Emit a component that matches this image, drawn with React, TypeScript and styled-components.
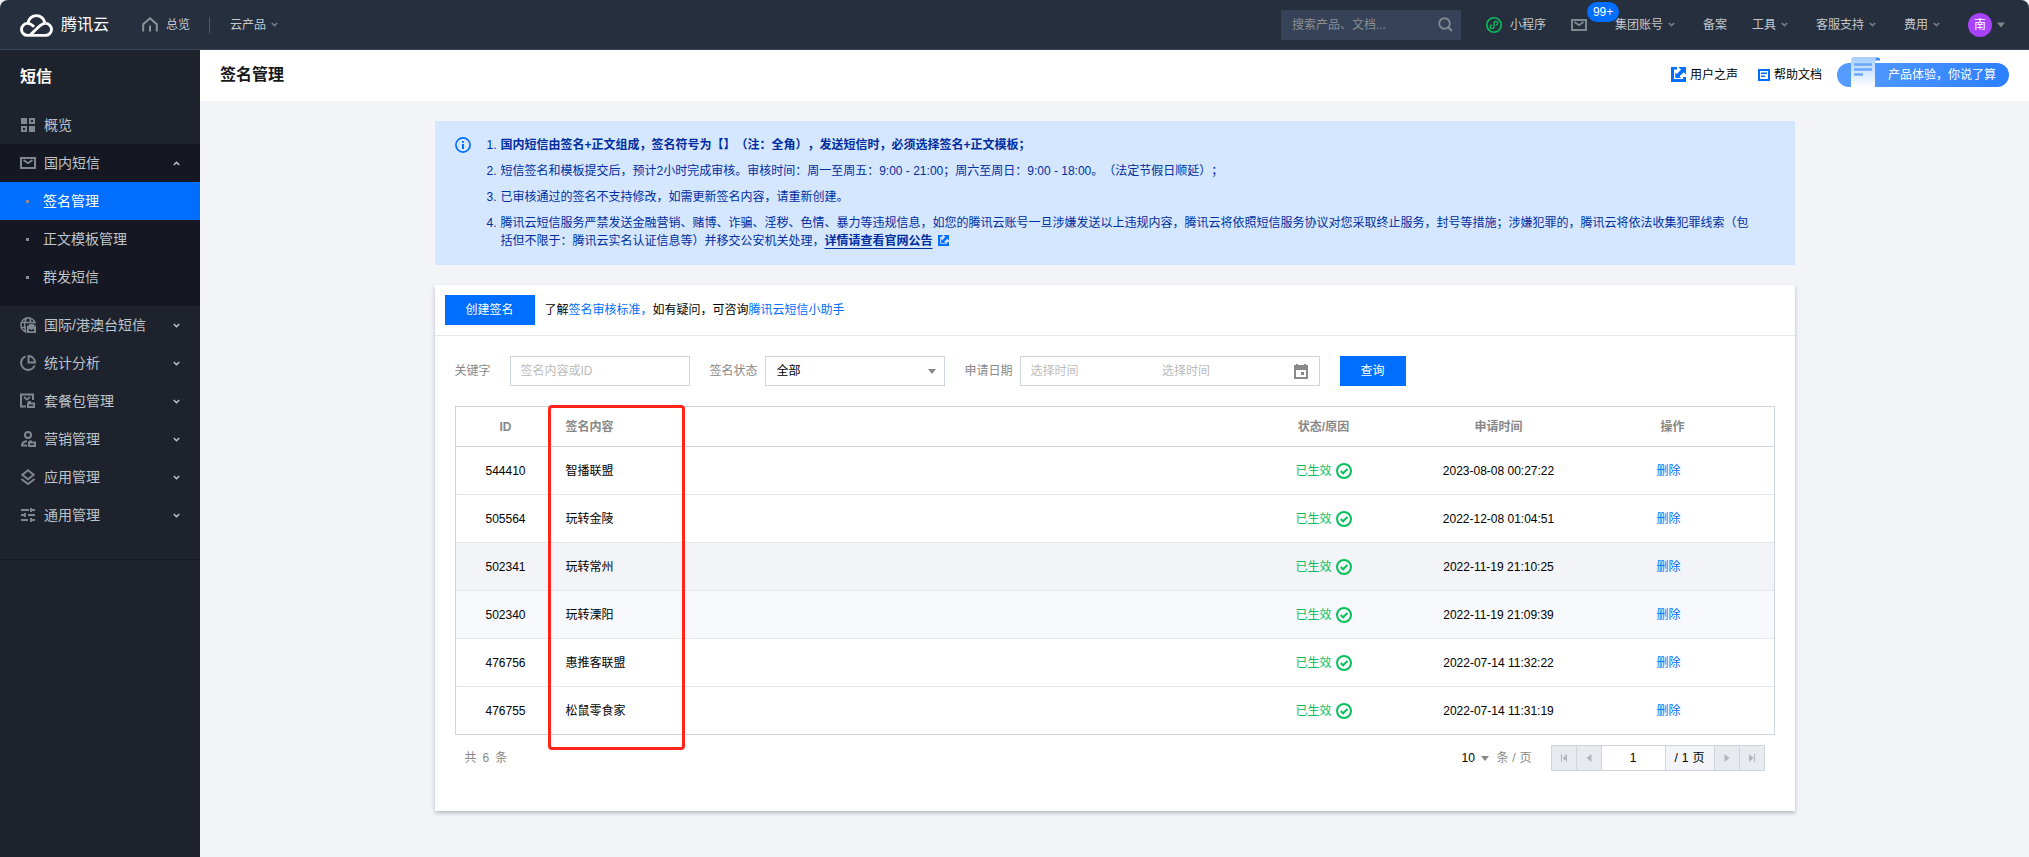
import React from 'react';
import styled, { createGlobalStyle } from 'styled-components';

const FONT = '"Liberation Sans", "Noto Sans CJK SC", sans-serif';
const BLUE = '#006eff';

const GlobalStyle = createGlobalStyle`
  *, *::before, *::after { box-sizing: border-box; }
  body {
    margin: 0;
    background: #f2f4f8;
    color: #000;
    font: 12px/18px ${FONT};
    text-spacing-trim: space-all;
  }
  button, input, select { font: inherit; color: inherit; margin: 0; border-radius: 0; }
  button { cursor: pointer; }
  a { text-decoration: none; }
  svg { display: block; flex: none; }
`;

/* ---------- top bar ---------- */

const TopBar = styled.header`
  display: flex;
  align-items: center;
  justify-content: space-between;
  height: 50px;
  padding: 0 24px 0 20px;
  background: #262f3e;
  border-bottom: 1px solid #3a4454;
  border-radius: 8px 8px 0 0;
  color: #c4c8cc;
`;

const TopGroup = styled.div<{ $gap?: number }>`
  display: flex;
  align-items: center;
  gap: ${(p) => p.$gap ?? 0}px;
`;

const Brand = styled.a`
  display: flex;
  align-items: center;
  gap: 8px;
  margin-right: 33px;
  color: #fff;
  font-size: 16px;
  line-height: 24px;
`;

const TopLink = styled.a<{ $gap?: number }>`
  display: flex;
  align-items: center;
  gap: ${(p) => p.$gap ?? 8}px;
  color: inherit;
  white-space: nowrap;
`;

const MenuButton = styled.button`
  display: flex;
  align-items: center;
  gap: 5px;
  padding: 0 3px 0 0;
  border: 0;
  background: none;
  white-space: nowrap;
`;

const Divider = styled.span`
  width: 1px;
  height: 16px;
  margin: 0 20px 0 19px;
  background: #4d5766;
`;

const SearchBox = styled.form`
  display: flex;
  align-items: center;
  width: 180px;
  height: 30px;
  padding: 0 8px 0 11px;
  background: #354258;
`;

const SearchInput = styled.input`
  flex: 1;
  min-width: 0;
  border: 0;
  padding: 0;
  outline: 0;
  background: none;
  &::placeholder { color: #8d8f93; opacity: 1; }
`;

const IconButton = styled.button`
  display: flex;
  align-items: center;
  justify-content: center;
  padding: 0;
  border: 0;
  background: none;
`;

const MailLink = styled.a`
  position: relative;
  display: flex;
`;

const Badge = styled.span`
  position: absolute;
  left: 16px;
  bottom: 9px;
  padding: 0 6px;
  border-radius: 10px;
  background: ${BLUE};
  color: #fff;
  line-height: 20px;
`;

const Avatar = styled.span`
  width: 24px;
  height: 24px;
  border-radius: 50%;
  background: #a742ff;
  color: #fff;
  line-height: 24px;
  text-align: center;
`;

/* ---------- shell ---------- */

const Shell = styled.div`
  display: flex;
  min-height: calc(100vh - 50px);
`;

const Sidebar = styled.aside`
  flex: none;
  width: 200px;
  background: #1e222d;
  color: #bfc4c9;
  font-size: 14px;
`;

const SidebarBody = styled.nav`
  padding-bottom: 25px;
  border-bottom: 1px solid #151822;
`;

const SidebarTitle = styled.h2`
  margin: 0;
  padding: 15px 20px 17px;
  color: #fff;
  font-size: 16px;
  line-height: 24px;
`;

const MenuList = styled.ul`
  margin: 0;
  padding: 0;
  list-style: none;
`;

const MenuLink = styled.a`
  display: flex;
  align-items: center;
  gap: 8px;
  height: 38px;
  padding: 0 20px;
  color: inherit;
`;

const MenuLabel = styled.span`
  flex: 1;
  line-height: 20px;
`;

const OpenGroup = styled.li`
  padding-bottom: 10px;
  background: #151822;
`;

const SubLink = styled.a<{ $active?: boolean }>`
  display: flex;
  align-items: center;
  gap: 14px;
  height: 38px;
  padding: 0 20px 0 26px;
  background: ${(p) => (p.$active ? BLUE : 'transparent')};
  color: ${(p) => (p.$active ? '#fff' : 'inherit')};
  &::before {
    content: '';
    width: 3px;
    height: 3px;
    background: #878d93;
  }
`;

const Main = styled.main`
  flex: 1;
  min-width: 0;
`;

const PageHead = styled.div`
  display: flex;
  align-items: center;
  justify-content: space-between;
  height: 51px;
  padding: 0 20px 2px;
  background: #fff;
`;

const PageTitle = styled.h1`
  margin: 0;
  font-size: 16px;
  line-height: 24px;
  color: #16181c;
`;

const HeadLinks = styled.div`
  display: flex;
  align-items: center;
`;

const HeadLink = styled.a`
  display: flex;
  align-items: center;
  gap: 4px;
  margin-right: 20px;
  color: #000;
`;

const Promo = styled.a`
  position: relative;
  display: block;
  width: 172px;
  height: 24px;
  margin-left: -5px;
  padding-left: 51px;
  border-radius: 12px;
  background: linear-gradient(90deg, #579dff, #2b7fff);
  color: #fff;
  line-height: 24px;
  white-space: nowrap;
`;

const PromoArt = styled.svg`
  position: absolute;
  left: 12px;
  bottom: 0;
`;

const Content = styled.div`
  max-width: 1400px;
  margin: 0 auto;
  padding: 20px;
`;

/* ---------- notice ---------- */

const Notice = styled.section`
  display: flex;
  gap: 16px;
  margin-bottom: 20px;
  padding: 15px 40px 15px 20px;
  background: #d5e7ff;
  color: #002da0;
`;

const NoticeList = styled.ol`
  display: flex;
  flex-direction: column;
  gap: 8px;
  margin: 0;
  padding: 0;
  list-style: none;
`;

const NoticeItem = styled.li<{ $strong?: boolean }>`
  display: flex;
  & > span:first-child { flex: none; width: 14px; }
  & > span:last-child { font-weight: ${(p) => (p.$strong ? 700 : 400)}; }
`;

const NoticeLink = styled.a`
  color: inherit;
  font-weight: 700;
  text-decoration: underline;
  text-underline-offset: 3px;
  margin-right: 5px;
`;

const InlineIcon = styled.svg`
  display: inline-block;
  vertical-align: -1px;
`;

/* ---------- card ---------- */

const Card = styled.section`
  padding-bottom: 40px;
  background: #fff;
  box-shadow: 0 2px 4px rgba(54, 58, 80, 0.32);
`;

const ActionBar = styled.div`
  display: flex;
  align-items: center;
  gap: 10px;
  padding: 10px;
  border-bottom: 1px solid #e5e7eb;
`;

const Primary = styled.button<{ $width: number }>`
  width: ${(p) => p.$width}px;
  height: 30px;
  padding: 0;
  border: 0;
  background: ${BLUE};
  color: #fff;
`;

const Hint = styled.p`
  margin: 0;
`;

const TextLink = styled.a`
  color: ${BLUE};
`;

const Filters = styled.form`
  display: flex;
  flex-wrap: wrap;
  gap: 20px;
  padding: 20px;
`;

const Field = styled.div`
  display: flex;
  align-items: center;
`;

const FieldLabel = styled.label`
  width: 55px;
  color: #888;
`;

const TextInput = styled.input`
  width: 180px;
  height: 30px;
  padding: 0 10px;
  border: 1px solid #cfd5de;
  background: #fff;
  &::placeholder { color: #bbb; opacity: 1; }
`;

const SelectWrap = styled.div`
  position: relative;
`;

const Select = styled.select`
  appearance: none;
  display: block;
  width: 180px;
  height: 30px;
  padding: 0 11px;
  border: 1px solid #cfd5de;
  background: #fff;
`;

const SelectArrow = styled.svg`
  position: absolute;
  right: 9px;
  top: 50%;
  margin-top: -2px;
  pointer-events: none;
`;

const DateRange = styled.div`
  display: flex;
  align-items: center;
  width: 300px;
  height: 30px;
  padding: 0 11px 0 10px;
  border: 1px solid #cfd5de;
`;

const DateInput = styled.input`
  flex: 1;
  min-width: 0;
  padding: 0;
  border: 0;
  outline: 0;
  &::placeholder { color: #bbb; opacity: 1; }
`;

const TableArea = styled.div`
  position: relative;
  margin: 0 20px;
`;

const Table = styled.table`
  width: 100%;
  table-layout: fixed;
  border: 1px solid #cfd5de;
  border-spacing: 0;
`;

const Th = styled.th<{ $left?: boolean }>`
  height: 40px;
  padding: 0 10px;
  border-bottom: 1px solid #cfd5de;
  color: #888;
  text-align: ${(p) => (p.$left ? 'left' : 'center')};
`;

const Td = styled.td<{ $left?: boolean }>`
  height: 48px;
  padding: 0 10px;
  border-bottom: 1px solid #e5e8ed;
  text-align: ${(p) => (p.$left ? 'left' : 'center')};
`;

const Tr = styled.tr<{ $bg?: string }>`
  background: ${(p) => p.$bg ?? '#fff'};
  &:last-child td { height: 47px; border-bottom: 0; }
`;

const Status = styled.span`
  display: flex;
  align-items: center;
  justify-content: center;
  gap: 4px;
  color: #0abf5b;
`;

const RowAction = styled.a`
  margin-right: 8px;
  color: ${BLUE};
`;

const Highlight = styled.div`
  position: absolute;
  top: -1px;
  left: 93px;
  width: 137px;
  height: 345px;
  border: 3px solid #ff2419;
  border-radius: 4px;
  pointer-events: none;
`;

const Footer = styled.div`
  display: flex;
  align-items: center;
  justify-content: space-between;
  padding: 10px 30px 0;
  color: #888;
`;

const Total = styled.span`
  display: flex;
  gap: 6px;
`;

const Pager = styled.div`
  display: flex;
  align-items: center;
`;

const SizeSelect = styled.select`
  appearance: none;
  width: 28px;
  height: 26px;
  padding: 0;
  border: 0;
  background: none;
  color: #000;
`;

const SizeWrap = styled.label`
  position: relative;
  display: flex;
  align-items: center;
  gap: 7px;
  margin-right: 20px;
  svg { right: auto; left: 20px; }
`;

const Slash = styled.span`
  display: inline-block;
  width: 11px;
  text-align: center;
`;

const PageButton = styled.button`
  display: flex;
  align-items: center;
  justify-content: center;
  width: 26px;
  height: 26px;
  margin-left: -1px;
  padding: 0;
  border: 1px solid #cfd5de;
  background: #e7eaef;
`;

const PageInput = styled.input`
  width: 65px;
  height: 26px;
  margin-left: -1px;
  padding: 0;
  border: 1px solid #cfd5de;
  color: #000;
  text-align: center;
`;

const PageCount = styled.span`
  display: flex;
  align-items: center;
  justify-content: center;
  gap: 4px;
  width: 50px;
  height: 26px;
  margin-left: -1px;
  border: 1px solid #cfd5de;
  background: #f2f4f8;
  color: #000;
`;

/* ---------- icons ---------- */

const G = '#7f878f';

const Chevron = ({ up, color = '#7b828b' }: { up?: boolean; color?: string }) => (
  <svg width="7" height="5" viewBox="0 0 7 5" fill="none" stroke={color} strokeWidth="1.5">
    <path d={up ? 'M.8 4 3.5 1.3 6.2 4' : 'M.8 1 3.5 3.7 6.2 1'} />
  </svg>
);

const LogoIcon = () => (
  <svg width="33" height="24" viewBox="0 0 33 24" fill="none" stroke="#fff" strokeWidth="2.9">
    <path d="M25.5 10.4a6 6 0 0 1 0 12h-18a6 6 0 0 1 0-12c3 0 4.6 1.4 6.6 3.4" />
    <path d="M25.5 10.4c-3 0-4.5 1.2-7 3.6l-8.3 8" />
    <path d="M8 9.8a8.5 8.5 0 0 1 16.8 0" />
  </svg>
);

const HomeIcon = () => (
  <svg width="16" height="15" viewBox="0 0 16 15" fill="none" stroke="#8c949c" strokeWidth="1.9">
    <path d="M1.2 14.5V7.2L8 1.3l6.8 5.900v7.300M8 8.500v6" />
  </svg>
);

const SearchIcon = () => (
  <svg width="15" height="15" viewBox="0 0 15 15" fill="none" stroke="#7f868d" strokeWidth="1.9">
    <circle cx="6.5" cy="6.5" r="5.3" />
    <path d="m10.5 10.5 3.3 3.5" strokeWidth="2.4" />
  </svg>
);

const MiniProgramIcon = () => (
  <svg width="16" height="16" viewBox="0 0 16 16" fill="none" stroke="#0abf5b">
    <circle cx="8" cy="8" r="7.2" strokeWidth="1.6" />
    <path d="M10.2 8.1A1.9 1.9 0 1 0 8 6v4a1.9 1.9 0 1 1-2.2-2.1" strokeWidth="1.4" strokeLinecap="round" />
  </svg>
);

const MailIcon = () => (
  <svg width="16" height="12" viewBox="0 0 16 12" fill="none" stroke={G} strokeWidth="2">
    <path d="M1 1h14v10H1z" />
    <path d="m3.5 3 4.500 3.200L12.500 3" strokeWidth="1.9" />
  </svg>
);

const GridIcon = () => (
  <svg width="16" height="14" viewBox="-1 0 16 14" fill={G}>
    <path d="M0 0h6v6H0zM8 8h6v6H8z" />
    <path fillRule="evenodd" d="M8 0h6v6H8zm2 2v2h2V2zM0 8h6v6H0zm2 2v2h2v-2z" />
  </svg>
);

const GlobeIcon = () => (
  <svg width="16" height="16" viewBox="0 0 16 16" fill="none" stroke={G} strokeWidth="1.6">
    <path d="M15.2 6.5A7.2 7.2 0 1 0 6.5 15.1M1 5.5h14M1 10.5h5M6 15C4.2 11 4.2 5 6.4 1M10.8 6C10.7 4 10.2 2.5 9.6 1" />
    <path d="M7 8.5h2V7h5v1.500h2V16H7z" fill={G} stroke="none" />
    <path d="M9 12h1.500v1h2v-1H14v2.200H9z" fill="#1e222d" stroke="none" />
  </svg>
);

const PieIcon = () => (
  <svg width="16" height="16" viewBox="0 0 16 16" fill="none" stroke={G} strokeWidth="1.9">
    <path d="M5.5 1.4A7 7 0 1 0 14.6 10.5" />
    <path d="M8.5 1v6.500H15A6.500 6.500 0 0 0 8.500 1z" />
  </svg>
);

const PackageIcon = () => (
  <svg width="16" height="16" viewBox="0 0 16 16" fill="none" stroke={G} strokeWidth="2">
    <path d="M6 13.500H1V1.500h12V7" />
    <path d="m4 4 3 2.600L10 4" strokeWidth="1.7" />
    <path d="M8 10.500h6V14H8zM8 9h3" />
  </svg>
);

const UserIcon = () => (
  <svg width="16" height="16" viewBox="0 0 16 16" fill="none" stroke={G} strokeWidth="2">
    <circle cx="8" cy="4" r="3" />
    <path d="M7 10.200c-3 .2-5 1.800-5 4.300h5M9 11.500h6V15H9zM9 10.500h3" />
  </svg>
);

const LayersIcon = () => (
  <svg width="16" height="16" viewBox="0 0 16 16" fill="none" stroke={G} strokeWidth="1.9">
    <path d="m8 1.200 5.700 4.500L8 10.200 2.300 5.700z" />
    <path d="m1.400 10 6.600 5 6.600-5" />
  </svg>
);

const SlidersIcon = () => (
  <svg width="16" height="14" viewBox="-1 0 16 14" fill="none" stroke={G} strokeWidth="1.9">
    <path d="M0 2h8M10 0v4M10 2h4M0 7h3M4 5v4M7 7h7M0 12h7M10 10v4M10 12h4" />
  </svg>
);

const ExternalGlyph = () => (
  <>
    <path d="M0 0h6v2.500H3V12h9V10h3v5H0z" fill={BLUE} />
    <path d="M7.500 0H15v7.500l-2.300-2.300L8.500 9.300l1.500 1.700H4.300V5.500L6 7l4-4.500z" fill={BLUE} />
  </>
);

const DocIcon = () => (
  <svg width="12" height="12" viewBox="0 0 12 12" fill="none" stroke={BLUE} strokeWidth="1.6">
    <path d="M1 1h10v10H1z" strokeWidth="2" />
    <path d="M3 4.200h6M3 7.200h4" />
  </svg>
);

const InfoIcon = () => (
  <svg width="16" height="18" viewBox="0 -1 16 18" fill="none" stroke={BLUE} strokeWidth="1.7">
    <circle cx="8" cy="8" r="7.1" />
    <path d="M8 7v5M8 4v1.700" strokeWidth="2" />
  </svg>
);

const CalendarIcon = () => (
  <svg width="14" height="15" viewBox="0 0 14 15" fill="#888">
    <path fillRule="evenodd" d="M0 1h2V0h2v1h6V0h2v1h2v14H0zm2 5v7h10V6z" />
    <path d="M7 8h3v3H7z" />
  </svg>
);

const CheckIcon = () => (
  <svg width="16" height="16" viewBox="0 0 16 16" fill="none" stroke="#0abf5b" strokeWidth="2">
    <circle cx="8" cy="8" r="7" />
    <path d="m4.700 8 2.400 2.300 4.300-4.300" />
  </svg>
);

/* ---------- data ---------- */

const rows = [
  { id: '544410', name: '智播联盟', time: '2023-08-08 00:27:22' },
  { id: '505564', name: '玩转金陵', time: '2022-12-08 01:04:51' },
  { id: '502341', name: '玩转常州', time: '2022-11-19 21:10:25', bg: '#f2f4f7' },
  { id: '502340', name: '玩转溧阳', time: '2022-11-19 21:09:39', bg: '#f8f9fc' },
  { id: '476756', name: '惠推客联盟', time: '2022-07-14 11:32:22' },
  { id: '476755', name: '松鼠零食家', time: '2022-07-14 11:31:19' },
];

const subMenu = ['签名管理', '正文模板管理', '群发短信'];

const menu = [
  { label: '国际/港澳台短信', icon: <GlobeIcon /> },
  { label: '统计分析', icon: <PieIcon /> },
  { label: '套餐包管理', icon: <PackageIcon /> },
  { label: '营销管理', icon: <UserIcon /> },
  { label: '应用管理', icon: <LayersIcon /> },
  { label: '通用管理', icon: <SlidersIcon /> },
];

const pagerPaths = {
  first: 'M1 1h1v8H1zM7 1v8L2.500 5z',
  prev: 'M6.500 1v8L1.500 5z',
  next: 'M1.500 1v8l5-4z',
  last: 'M6 1h1v8H6zM1 1v8l4.500-4z',
};

const PagerButton = ({ kind, label }: { kind: keyof typeof pagerPaths; label: string }) => (
  <PageButton type="button" aria-label={label}>
    <svg width="8" height="10" viewBox="0 0 8 10" fill="#b3b7bd">
      <path d={pagerPaths[kind]} />
    </svg>
  </PageButton>
);

export default function App() {
  return (
    <>
      <GlobalStyle />
      <TopBar>
        <TopGroup>
          <Brand href="#">
            <LogoIcon />
            腾讯云
          </Brand>
          <TopLink href="#">
            <HomeIcon />
            总览
          </TopLink>
          <Divider />
          <MenuButton type="button">
            云产品
            <Chevron />
          </MenuButton>
        </TopGroup>
        <TopGroup $gap={25}>
          <SearchBox>
            <SearchInput type="search" aria-label="搜索" placeholder="搜索产品、文档..." />
            <IconButton type="button" aria-label="搜索">
              <SearchIcon />
            </IconButton>
          </SearchBox>
          <TopLink href="#">
            <MiniProgramIcon />
            小程序
          </TopLink>
          <TopGroup $gap={28}>
            <MailLink href="#" aria-label="消息">
              <MailIcon />
              <Badge>99+</Badge>
            </MailLink>
            <MenuButton type="button">
              集团账号
              <Chevron />
            </MenuButton>
          </TopGroup>
          <TopLink href="#">备案</TopLink>
          {['工具', '客服支持', '费用'].map((label) => (
            <MenuButton type="button" key={label}>
              {label}
              <Chevron />
            </MenuButton>
          ))}
          <TopLink href="#" $gap={5}>
            <Avatar>南</Avatar>
            <svg width="8" height="6" viewBox="0 0 8 6" fill="#7f858c">
              <path d="M0 .5h8L4 5.500z" />
            </svg>
          </TopLink>
        </TopGroup>
      </TopBar>

      <Shell>
        <Sidebar>
          <SidebarBody>
            <SidebarTitle>短信</SidebarTitle>
            <MenuList>
              <li>
                <MenuLink href="#">
                  <GridIcon />
                  <MenuLabel>概览</MenuLabel>
                </MenuLink>
              </li>
              <OpenGroup>
                <MenuLink href="#">
                  <MailIcon />
                  <MenuLabel>国内短信</MenuLabel>
                  <Chevron up color="#bfc4c9" />
                </MenuLink>
                <MenuList>
                  {subMenu.map((label, i) => (
                    <li key={label}>
                      <SubLink href="#" $active={i === 0}>
                        {label}
                      </SubLink>
                    </li>
                  ))}
                </MenuList>
              </OpenGroup>
              {menu.map((item) => (
                <li key={item.label}>
                  <MenuLink href="#">
                    {item.icon}
                    <MenuLabel>{item.label}</MenuLabel>
                    <Chevron color="#bfc4c9" />
                  </MenuLink>
                </li>
              ))}
            </MenuList>
          </SidebarBody>
        </Sidebar>

        <Main>
          <PageHead>
            <PageTitle>签名管理</PageTitle>
            <HeadLinks>
              <HeadLink href="#">
                <svg width="15" height="15" viewBox="0 0 15 15">
                  <ExternalGlyph />
                </svg>
                用户之声
              </HeadLink>
              <HeadLink href="#">
                <DocIcon />
                帮助文档
              </HeadLink>
              <Promo href="#">
                <PromoArt width="34" height="30" viewBox="0 0 34 30">
                  <defs>
                    <linearGradient id="paper" x1="0" y1="0" x2="0" y2="1">
                      <stop offset="0" stopColor="#a6cdff" />
                      <stop offset="1" stopColor="#fff" />
                    </linearGradient>
                  </defs>
                  <path d="M26 3.500h5V1.500Q30 .5 27 0z" fill="#3d87f5" />
                  <path d="M2 30V3.500Q2 0 5.500 0H29q-3 .5-3 4v26z" fill="url(#paper)" />
                  <path d="M5 7.500h18M5 12.500h18M5 17.500h9" stroke="#6ba8ff" strokeWidth="2.4" />
                </PromoArt>
                产品体验，你说了算
              </Promo>
            </HeadLinks>
          </PageHead>

          <Content>
            <Notice>
              <InfoIcon />
              <NoticeList>
                <NoticeItem $strong>
                  <span>1.</span>
                  <span>国内短信由签名+正文组成，签名符号为【】（注：全角），发送短信时，必须选择签名+正文模板；</span>
                </NoticeItem>
                <NoticeItem>
                  <span>2.</span>
                  <span>
                    短信签名和模板提交后，预计2小时完成审核。审核时间：周一至周五：9:00 - 21:00；周六至周日：9:00 - 18:00。（法定节假日顺延）；
                  </span>
                </NoticeItem>
                <NoticeItem>
                  <span>3.</span>
                  <span>已审核通过的签名不支持修改，如需更新签名内容，请重新创建。</span>
                </NoticeItem>
                <NoticeItem>
                  <span>4.</span>
                  <span>
                    腾讯云短信服务严禁发送金融营销、赌博、诈骗、淫秽、色情、暴力等违规信息，如您的腾讯云账号一旦涉嫌发送以上违规内容，腾讯云将依照短信服务协议对您采取终止服务，封号等措施；涉嫌犯罪的，腾讯云将依法收集犯罪线索（包括但不限于：腾讯云实名认证信息等）并移交公安机关处理，
                    <NoticeLink href="#">详情请查看官网公告</NoticeLink>
                    <InlineIcon width="11" height="11" viewBox="0 0 15 15">
                      <ExternalGlyph />
                    </InlineIcon>
                  </span>
                </NoticeItem>
              </NoticeList>
            </Notice>

            <Card>
              <ActionBar>
                <Primary type="button" $width={90}>
                  创建签名
                </Primary>
                <Hint>
                  了解<TextLink href="#">签名审核标准，</TextLink>如有疑问，可咨询
                  <TextLink href="#">腾讯云短信小助手</TextLink>
                </Hint>
              </ActionBar>

              <Filters>
                <Field>
                  <FieldLabel htmlFor="keyword">关键字</FieldLabel>
                  <TextInput id="keyword" type="text" placeholder="签名内容或ID" />
                </Field>
                <Field>
                  <FieldLabel htmlFor="status">签名状态</FieldLabel>
                  <SelectWrap>
                    <Select id="status" defaultValue="全部">
                      <option>全部</option>
                    </Select>
                    <SelectArrow width="8" height="5" viewBox="0 0 8 5" fill="#888">
                      <path d="M0 0h8L4 5z" />
                    </SelectArrow>
                  </SelectWrap>
                </Field>
                <Field>
                  <FieldLabel htmlFor="date-from">申请日期</FieldLabel>
                  <DateRange>
                    <DateInput id="date-from" type="text" placeholder="选择时间" />
                    <DateInput type="text" aria-label="结束日期" placeholder="选择时间" />
                    <IconButton type="button" aria-label="选择日期">
                      <CalendarIcon />
                    </IconButton>
                  </DateRange>
                </Field>
                <Primary type="button" $width={66}>
                  查询
                </Primary>
              </Filters>

              <TableArea>
                <Table>
                  <colgroup>
                    <col style={{ width: 100 }} />
                    <col />
                    <col style={{ width: 204 }} />
                    <col style={{ width: 146 }} />
                    <col style={{ width: 202 }} />
                  </colgroup>
                  <thead>
                    <tr>
                      <Th>ID</Th>
                      <Th $left>签名内容</Th>
                      <Th>状态/原因</Th>
                      <Th>申请时间</Th>
                      <Th>操作</Th>
                    </tr>
                  </thead>
                  <tbody>
                    {rows.map((row) => (
                      <Tr key={row.id} $bg={row.bg}>
                        <Td>{row.id}</Td>
                        <Td $left>{row.name}</Td>
                        <Td>
                          <Status>
                            已生效
                            <CheckIcon />
                          </Status>
                        </Td>
                        <Td>{row.time}</Td>
                        <Td>
                          <RowAction href="#">删除</RowAction>
                        </Td>
                      </Tr>
                    ))}
                  </tbody>
                </Table>
                <Highlight />
              </TableArea>

              <Footer>
                <Total>
                  <span>共</span>
                  <span>6</span>
                  <span>条</span>
                </Total>
                <Pager>
                  <SizeWrap>
                    <SizeSelect defaultValue="10" aria-label="每页条数">
                      <option>10</option>
                    </SizeSelect>
                    <SelectArrow width="8" height="5" viewBox="0 0 8 5" fill="#888">
                      <path d="M0 0h8L4 5z" />
                    </SelectArrow>
                    <span>
                      条<Slash>/</Slash>页
                    </span>
                  </SizeWrap>
                  <PagerButton kind="first" label="第一页" />
                  <PagerButton kind="prev" label="上一页" />
                  <PageInput type="text" aria-label="页码" defaultValue="1" />
                  <PageCount>
                    <span>/</span>
                    <span>1</span>
                    <span>页</span>
                  </PageCount>
                  <PagerButton kind="next" label="下一页" />
                  <PagerButton kind="last" label="最后一页" />
                </Pager>
              </Footer>
            </Card>
          </Content>
        </Main>
      </Shell>
    </>
  );
}
